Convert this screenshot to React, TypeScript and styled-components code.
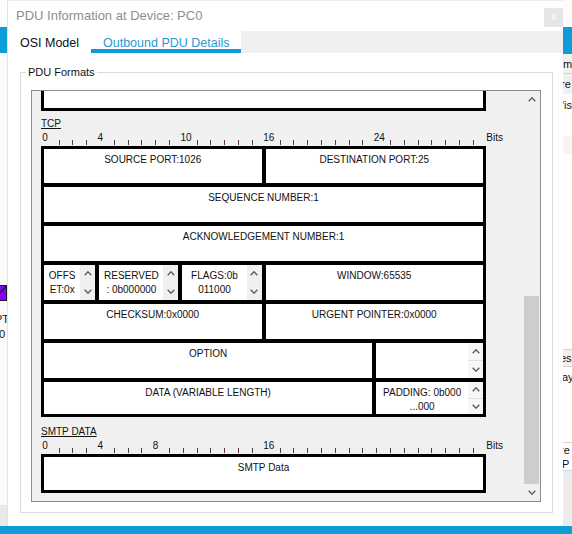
import React from 'react';
import styled, { createGlobalStyle } from 'styled-components';

const ACCENT = '#0c9dd9';

const GlobalStyle = createGlobalStyle`
  html, body {
    margin: 0;
    padding: 0;
    background: #fff;
  }
  body {
    font-family: 'Liberation Sans', Arial, sans-serif;
  }
  * {
    box-sizing: border-box;
  }
`;

/* ---------- page frame ---------- */

const Screen = styled.div`
  width: 572px;
  height: 534px;
  overflow: hidden;
  display: flex;
  flex-direction: column;
  background: #fff;
`;

const Workspace = styled.div`
  display: flex;
  height: 526px;
`;

const BottomBand = styled.div`
  height: 8px;
  background: ${ACCENT};
`;

const SideStrip = styled.div<{ $w: number }>`
  width: ${({ $w }) => $w}px;
  flex: none;
  display: flex;
  flex-direction: column;
  overflow: hidden;
  background: #fafafa;
  font-size: 11px;
  color: #111;
`;

const StripBlock = styled.div<{ $h: number; $bg?: string; $line?: boolean }>`
  height: ${({ $h }) => $h}px;
  flex: none;
  background: ${({ $bg }) => $bg ?? 'transparent'};
  border-bottom: ${({ $line }) => ($line ? '1px solid #d4d4d4' : 'none')};
  white-space: nowrap;
  line-height: ${({ $h }) => $h}px;
`;

const StripFill = styled.div<{ $bg?: string }>`
  flex: 1;
  background: ${({ $bg }) => $bg ?? 'transparent'};
`;

const StripText = styled.span<{ $shift?: number }>`
  display: inline-block;
  margin-left: ${({ $shift }) => $shift ?? 0}px;
`;

/* ---------- dialog ---------- */

const Dialog = styled.div`
  width: 556px;
  flex: none;
  display: flex;
  flex-direction: column;
  background: #fff;
  border-left: 1px solid #e2e2e2;
  border-top: 1px solid #eeeeee;
`;

const TitleBar = styled.div`
  height: 30px;
  display: flex;
  justify-content: space-between;
  align-items: flex-start;
`;

const Title = styled.div`
  padding: 5px 0 0 8px;
  font-size: 13px;
  line-height: 20px;
  color: #8e8e8e;
`;

const CloseButton = styled.div`
  width: 19px;
  height: 19px;
  margin-top: 7px;
  background: #e6e6e6;
  color: #fff;
  font-size: 11px;
  line-height: 17px;
  text-align: center;
`;

const TabBar = styled.div`
  height: 22px;
  display: flex;
`;

const Tab = styled.div<{ $active?: boolean; $w: number; $pl: number }>`
  width: ${({ $w }) => $w}px;
  height: 22px;
  flex: none;
  padding: 5px 0 0 ${({ $pl }) => $pl}px;
  font-size: 12.5px;
  line-height: 14px;
  color: ${({ $active }) => ($active ? '#1f9bd6' : '#111')};
  border-bottom: 4px solid ${({ $active }) => ($active ? ACCENT : 'transparent')};
  white-space: nowrap;
`;

const TabFill = styled.div`
  flex: 1;
  background: #efefef;
`;

const Body = styled.div`
  flex: 1;
  display: flex;
  padding: 19px 10px 13px 12px;
`;

const Group = styled.div`
  flex: 1;
  position: relative;
  display: flex;
  border: 1px solid #dcdcdc;
  padding: 17px 11px 10px 10px;
`;

const GroupLegend = styled.div`
  position: absolute;
  top: -7px;
  left: 5px;
  padding: 0 2px;
  background: #fff;
  font-size: 11px;
  line-height: 13px;
  color: #111;
`;

const ScrollBox = styled.div`
  flex: 1;
  display: flex;
  border: 1px solid #8c8c8c;
  background: #f0f0f0;
  overflow: hidden;
`;

const ScrollContent = styled.div`
  flex: 1;
  padding-left: 9px;
  overflow: hidden;
`;

const ScrollBar = styled.div`
  width: 16px;
  flex: none;
  display: flex;
  flex-direction: column;
`;

const ScrollArrow = styled.div`
  height: 17px;
  flex: none;
  display: flex;
  align-items: center;
  justify-content: center;
`;

const ScrollTrack = styled.div`
  flex: 1;
  display: flex;
  flex-direction: column;
  padding-top: 188px;
`;

const ScrollThumb = styled.div`
  flex: 1;
  width: 15px;
  background: #cdcdcd;
`;

/* ---------- PDU diagram ---------- */

const PrevLayerTail = styled.div`
  width: 445px;
  height: 20px;
  background: #fff;
  border: 3px solid #000;
  border-top: none;
`;

const Section = styled.div<{ $gap: number }>`
  margin-top: ${({ $gap }) => $gap}px;
  width: 445px;
`;

const SectionLabel = styled.div`
  font-size: 10px;
  line-height: 13px;
  color: #111;
  text-decoration: underline;
`;

const Ruler = styled.div`
  display: flex;
  height: 16px;
  margin-left: -2.7px;
  font-size: 10px;
  color: #111;
`;

const RulerSlot = styled.div<{ $label?: boolean }>`
  width: 13.82px;
  flex: none;
  display: flex;
  align-items: flex-end;
  justify-content: ${({ $label }) => ($label ? 'flex-start' : 'center')};
  padding-bottom: ${({ $label }) => ($label ? 2 : 1)}px;
  padding-left: ${({ $label }) => ($label ? 4 : 0)}px;
  line-height: 12px;
  white-space: nowrap;
`;

const Tick = styled.span`
  width: 1px;
  height: 5px;
  background: #5a3552;
`;

const RulerUnit = styled.div`
  padding: 0 0 2px 6px;
  display: flex;
  align-items: flex-end;
  line-height: 12px;
`;

const FieldGrid = styled.div<{ $rows: string }>`
  display: grid;
  grid-template-columns: repeat(32, 1fr);
  grid-template-rows: ${({ $rows }) => $rows};
  gap: 4px;
  padding: 3px;
  background: #000;
`;

const Field = styled.div<{ $span: number }>`
  grid-column: span ${({ $span }) => $span};
  display: flex;
  background: #fff;
  min-width: 0;
  overflow: hidden;
`;

const FieldText = styled.div`
  flex: 1;
  min-width: 0;
  padding-top: 4px;
  font-size: 10px;
  line-height: 14px;
  color: #111;
  text-align: center;
  white-space: pre-line;
`;

const Spin = styled.div<{ $divider?: boolean }>`
  width: 15px;
  flex: none;
  display: flex;
  flex-direction: column;
  background: ${({ $divider }) => ($divider ? '#f7f7f7' : '#f0f0f0')};
`;

const SpinHalf = styled.div<{ $divider?: boolean }>`
  flex: 1;
  display: flex;
  align-items: center;
  justify-content: center;
  border-top: ${({ $divider }) => ($divider ? '1px solid #dedede' : 'none')};
`;

const Chevron: React.FC<{ down?: boolean; color?: string }> = ({ down, color = '#5c5c5c' }) => (
  <svg width="8" height="5" viewBox="0 0 8 5" aria-hidden="true">
    <polyline
      points={down ? '0.7,0.8 4,4.2 7.3,0.8' : '0.7,4.2 4,0.8 7.3,4.2'}
      fill="none"
      stroke={color}
      strokeWidth="1.4"
    />
  </svg>
);

const PduIcon: React.FC = () => (
  <svg width="7" height="16" viewBox="0 0 7 16" aria-hidden="true">
    <rect x="-9" y="0.5" width="15.5" height="15" fill="#8a00ff" stroke="#1b1b1b" strokeWidth="1" />
    <line x1="6.5" y1="1" x2="0" y2="8" stroke="#1b1b1b" strokeWidth="1.3" />
  </svg>
);

type FieldDef = { span: number; text: string; spin?: boolean; divider?: boolean };

const tcpFields: FieldDef[] = [
  { span: 16, text: 'SOURCE PORT:1026' },
  { span: 16, text: 'DESTINATION PORT:25' },
  { span: 32, text: 'SEQUENCE NUMBER:1' },
  { span: 32, text: 'ACKNOWLEDGEMENT NUMBER:1' },
  { span: 4, text: 'OFFS\nET:0x', spin: true },
  { span: 6, text: 'RESERVED\n: 0b000000', spin: true },
  { span: 6, text: 'FLAGS:0b\n011000', spin: true },
  { span: 16, text: 'WINDOW:65535' },
  { span: 16, text: 'CHECKSUM:0x0000' },
  { span: 16, text: 'URGENT POINTER:0x0000' },
  { span: 24, text: 'OPTION' },
  { span: 8, text: '', spin: true, divider: true },
  { span: 24, text: 'DATA (VARIABLE LENGTH)' },
  { span: 8, text: 'PADDING: 0b000\n...000', spin: true, divider: true },
];

const smtpFields: FieldDef[] = [{ span: 32, text: 'SMTP Data' }];

const BitRuler: React.FC<{ labels: number[] }> = ({ labels }) => (
  <Ruler>
    {Array.from({ length: 32 }, (_, i) =>
      labels.includes(i) ? (
        <RulerSlot key={i} $label>
          {i}
        </RulerSlot>
      ) : (
        <RulerSlot key={i}>
          <Tick />
        </RulerSlot>
      )
    )}
    <RulerUnit>Bits</RulerUnit>
  </Ruler>
);

const FieldBox: React.FC<{ field: FieldDef }> = ({ field }) => (
  <Field $span={field.span}>
    <FieldText>{field.text}</FieldText>
    {field.spin && (
      <Spin $divider={field.divider}>
        <SpinHalf>
          <Chevron />
        </SpinHalf>
        <SpinHalf $divider={field.divider}>
          <Chevron down />
        </SpinHalf>
      </Spin>
    )}
  </Field>
);

const PduSection: React.FC<{
  title: string;
  labels: number[];
  fields: FieldDef[];
  rows: string;
  gap: number;
}> = ({ title, labels, fields, rows, gap }) => (
  <Section $gap={gap}>
    <SectionLabel>{title}</SectionLabel>
    <BitRuler labels={labels} />
    <FieldGrid $rows={rows}>
      {fields.map((f, i) => (
        <FieldBox key={i} field={f} />
      ))}
    </FieldGrid>
  </Section>
);

export default function App() {
  return (
    <>
      <GlobalStyle />
      <Screen>
        <Workspace>
          <SideStrip $w={7}>
            <StripBlock $h={27} $bg="#fdfdfd" />
            <StripBlock $h={26} $bg={ACCENT} />
            <StripBlock $h={232} />
            <StripBlock $h={16}>
              <PduIcon />
            </StripBlock>
            <StripBlock $h={11} />
            <StripBlock $h={15}>
              <StripText $shift={-5}>PT</StripText>
            </StripBlock>
            <StripBlock $h={15}>
              <StripText $shift={-1}>0</StripText>
            </StripBlock>
            <StripFill />
            <StripBlock $h={21} $bg="#e8e8e8" />
          </SideStrip>

          <Dialog>
            <TitleBar>
              <Title>PDU Information at Device: PC0</Title>
              <CloseButton>x</CloseButton>
            </TitleBar>
            <TabBar>
              <Tab $w={83} $pl={12}>OSI Model</Tab>
              <Tab $w={150} $pl={12} $active>
                Outbound PDU Details
              </Tab>
              <TabFill />
            </TabBar>
            <Body>
              <Group>
                <GroupLegend>PDU Formats</GroupLegend>
                <ScrollBox>
                  <ScrollContent>
                    <PrevLayerTail />
                    <PduSection
                      title="TCP"
                      labels={[0, 4, 10, 16, 24]}
                      fields={tcpFields}
                      rows="34px 35px 35px 35px 35px 35px 32px"
                      gap={6}
                    />
                    <PduSection
                      title="SMTP DATA"
                      labels={[0, 4, 8, 16]}
                      fields={smtpFields}
                      rows="33px"
                      gap={8}
                    />
                  </ScrollContent>
                  <ScrollBar>
                    <ScrollArrow>
                      <Chevron color="#606060" />
                    </ScrollArrow>
                    <ScrollTrack>
                      <ScrollThumb />
                    </ScrollTrack>
                    <ScrollArrow>
                      <Chevron down color="#606060" />
                    </ScrollArrow>
                  </ScrollBar>
                </ScrollBox>
              </Group>
            </Body>
          </Dialog>

          <SideStrip $w={9}>
            <StripBlock $h={27} $bg="#fdfdfd" />
            <StripBlock $h={27} $bg={ACCENT} />
            <StripBlock $h={20} $bg="#f0f0f0" $line>
              <StripText>m</StripText>
            </StripBlock>
            <StripBlock $h={20} $bg="#f0f0f0">
              <StripText $shift={-2}>re</StripText>
            </StripBlock>
            <StripBlock $h={22} $bg="#fff">
              <StripText $shift={-1}>'is</StripText>
            </StripBlock>
            <StripBlock $h={20} $bg="#fff" />
            <StripBlock $h={18} $bg="#f4f4f4" />
            <StripBlock $h={196} $bg="#fff" $line />
            <StripBlock $h={17} $bg="#f0f0f0" $line>
              <StripText $shift={-3}>es</StripText>
            </StripBlock>
            <StripBlock $h={20} $bg="#fff">
              <StripText $shift={-1}>ay</StripText>
            </StripBlock>
            <StripBlock $h={56} $bg="#fff" $line />
            <StripBlock $h={14} $bg="#fff">
              <StripText $shift={-3}>re</StripText>
            </StripBlock>
            <StripBlock $h={14} $bg="#fff" $line>
              <StripText $shift={-1}>P</StripText>
            </StripBlock>
            <StripFill $bg="#ececec" />
          </SideStrip>
        </Workspace>
        <BottomBand />
      </Screen>
    </>
  );
}
